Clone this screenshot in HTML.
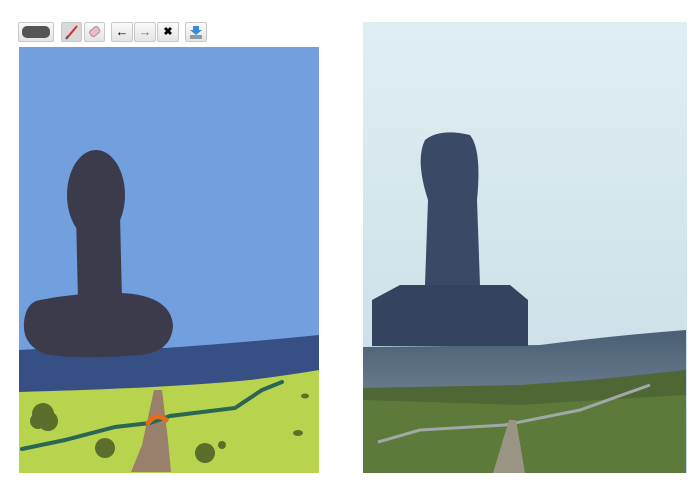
<!DOCTYPE html>
<html><head><style>
body{margin:0;width:700px;height:483px;background:#fff;position:relative;overflow:hidden;font-family:"Liberation Sans",sans-serif}
.b{position:absolute;top:22px;height:20px;background:linear-gradient(#fafafa,#e4e4e4);border:1px solid #c8c8c8;border-radius:2px;box-sizing:border-box}
</style></head><body>
<div class="b" style="left:18px;width:36px"><div style="margin:3px 3px;height:12px;background:#555;border-radius:5px"></div></div>
<div class="b" style="left:61px;width:21px;background:#d8d8d8"><svg width="19" height="18"><line x1="5" y1="15" x2="15" y2="3" stroke="#c33" stroke-width="2"/><line x1="4" y1="16" x2="6" y2="13" stroke="#555" stroke-width="2"/></svg></div>
<div class="b" style="left:84px;width:21px"><svg width="19" height="18"><rect x="5" y="5" width="10" height="7" rx="2" transform="rotate(-40 10 9)" fill="#f0b8c0" stroke="#999"/></svg></div>
<div class="b" style="left:111px;width:22px;text-align:center;font-size:13px;line-height:17px">←</div>
<div class="b" style="left:134px;width:22px;text-align:center;font-size:13px;line-height:17px;color:#777">→</div>
<div class="b" style="left:157px;width:22px;text-align:center;font-size:11px;line-height:18px;font-weight:bold">✖</div>
<div class="b" style="left:185px;width:22px"><svg width="20" height="18"><path d="M7 3h6v4h3l-6 5-6-5h3z" fill="#3a8ad8"/><rect x="4" y="12" width="12" height="4" fill="#8a9aa8"/></svg></div>
<svg style="position:absolute;left:19px;top:47px" width="300" height="426" viewBox="19 47 300 426">
<rect x="19" y="47" width="300" height="426" fill="#729fde"/>
<path d="M19 350 Q100 345 165 348 Q250 342 319 335 V380 L19 395Z" fill="#364f85"/>
<path d="M19 392 Q170 388 250 380 Q290 375 319 370 V473 H19Z" fill="#b8d34e"/>
<path d="M154 390 L162 390 L168 440 L171 472 L131 472 L142 445Z" fill="#98806c"/>
<path d="M22 449 L65 440 L115 427 L150 423 L170 416 L235 408 L262 390 L282 382" fill="none" stroke="#2a6651" stroke-width="4" stroke-linecap="round"/>
<path d="M148 423 Q156 412 166 420" fill="none" stroke="#e06d1a" stroke-width="5" stroke-linecap="round"/>
<circle cx="43" cy="414" r="11" fill="#5b6e2b"/><circle cx="48" cy="421" r="10" fill="#5b6e2b"/><circle cx="38" cy="421" r="8" fill="#5b6e2b"/>
<circle cx="105" cy="448" r="10" fill="#5b6e2b"/><circle cx="205" cy="453" r="10" fill="#5b6e2b"/><circle cx="222" cy="445" r="4" fill="#5b6e2b"/>
<ellipse cx="305" cy="396" rx="4" ry="2.5" fill="#5b6e2b"/><ellipse cx="298" cy="433" rx="5" ry="3" fill="#5b6e2b"/>
<ellipse cx="96" cy="195" rx="29" ry="45" fill="#3b3b4c"/>
<path d="M76 215 L120 215 L122 300 L78 300Z" fill="#3b3b4c"/>
<path d="M40 300 Q80 292 120 293 Q170 295 173 325 Q172 352 140 355 Q80 360 45 354 Q22 345 24 322 Q26 302 40 300Z" fill="#3b3b4c"/>
</svg>
<svg style="position:absolute;left:363px;top:22px" width="324" height="451" viewBox="363 22 324 451">
<defs><linearGradient id="s" x1="0" y1="0" x2="0" y2="1"><stop offset="0" stop-color="#dfeef2"/><stop offset="1" stop-color="#c8dbe6"/></linearGradient>
<linearGradient id="w" x1="0" y1="0" x2="0" y2="1"><stop offset="0" stop-color="#4a5e74"/><stop offset="1" stop-color="#66798a"/></linearGradient></defs>
<rect x="363" y="22" width="324" height="451" fill="url(#s)"/>
<path d="M363 347 L540 345 Q620 335 686 330 V388 H363Z" fill="url(#w)"/>
<path d="M363 388 L520 385 L600 380 L686 370 V473 H363Z" fill="#5d7a3a"/>
<path d="M363 388 L520 385 L590 380 L686 370 V395 L600 400 L520 405 L363 400Z" fill="#4a5f32" opacity=".7"/>
<path d="M378 442 L420 430 L505 425 L580 410 L650 385" fill="none" stroke="#a0a8a8" stroke-width="3"/>
<path d="M509 420 L516 420 L525 473 L493 473Z" fill="#9a9484"/>
<path d="M425 140 Q440 128 470 135 Q482 150 477 200 L480 285 L425 285 L428 200 Q415 160 425 140Z" fill="#3a4a66"/>
<path d="M372 300 L400 285 L510 285 L528 300 L528 346 L372 346Z" fill="#34445e"/>
</svg>
</body></html>
